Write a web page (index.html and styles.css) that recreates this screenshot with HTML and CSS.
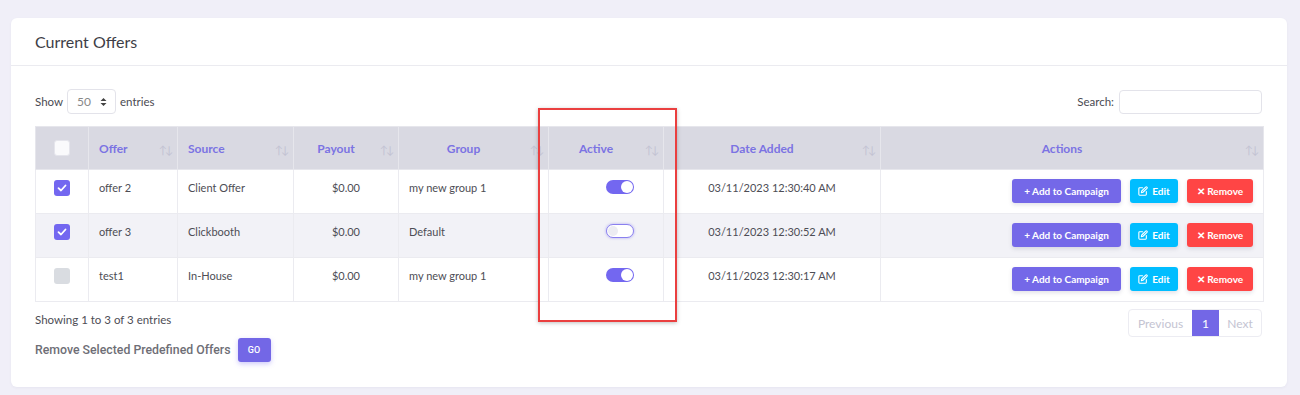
FILE: index.html
```html
<!DOCTYPE html>
<html>
<head>
<meta charset="utf-8">
<link rel="stylesheet" href="styles.css">
</head>
<body>
<div class="card">
  <div class="card-header">Current Offers</div>
  <div class="card-body">
    <div class="toolbar">
      <div class="length">Show <span class="select">50 <svg width="7" height="10" viewBox="0 0 7 10"><path d="M0.5 4 L3.5 1 L6.5 4 Z M0.5 6 L3.5 9 L6.5 6 Z" fill="#444"/></svg></span> entries</div>
      <div class="search">Search: <span class="input"></span></div>
    </div>
    <table class="grid">
      <colgroup>
        <col style="width:53px"><col style="width:89px"><col style="width:116px"><col style="width:105px"><col style="width:150px"><col style="width:115px"><col style="width:217px"><col style="width:383px">
      </colgroup>
      <thead>
        <tr>
          <th class="c-check"><span class="cb cb-head"></span></th>
          <th class="left">Offer<span class="sort">↑↓</span></th>
          <th class="left">Source<span class="sort">↑↓</span></th>
          <th>Payout<span class="sort">↑↓</span></th>
          <th>Group<span class="sort">↑↓</span></th>
          <th>Active<span class="sort">↑↓</span></th>
          <th>Date Added<span class="sort">↑↓</span></th>
          <th>Actions<span class="sort">↑↓</span></th>
        </tr>
      </thead>
      <tbody>
        <tr>
          <td class="c-check"><span class="cb cb-on"><svg width="10" height="8" viewBox="0 0 10 8"><path d="M1.5 4.2 L4 6.5 L8.5 1.5" stroke="#fff" stroke-width="1.8" fill="none" stroke-linecap="round" stroke-linejoin="round"/></svg></span></td>
          <td>offer 2</td>
          <td>Client Offer</td>
          <td class="right">$0.00</td>
          <td>my new group 1</td>
          <td class="c-toggle"><span class="toggle on"></span></td>
          <td class="center">03/11/2023 12:30:40 AM</td>
          <td class="c-actions"><div class="actions"><span class="btn btn-add">+ Add to Campaign</span><span class="btn btn-edit"><svg width="10" height="10" viewBox="0 0 24 24" fill="none" stroke="#fff" stroke-width="2.6" stroke-linecap="round" stroke-linejoin="round"><path d="M11 4H4a2 2 0 0 0-2 2v14a2 2 0 0 0 2 2h14a2 2 0 0 0 2-2v-7"/><path d="M18.5 2.5a2.121 2.121 0 0 1 3 3L12 15l-4 1 1-4 9.5-9.5z"/></svg>Edit</span><span class="btn btn-remove">✕ Remove</span></div></td>
        </tr>
        <tr class="alt">
          <td class="c-check"><span class="cb cb-on"><svg width="10" height="8" viewBox="0 0 10 8"><path d="M1.5 4.2 L4 6.5 L8.5 1.5" stroke="#fff" stroke-width="1.8" fill="none" stroke-linecap="round" stroke-linejoin="round"/></svg></span></td>
          <td>offer 3</td>
          <td>Clickbooth</td>
          <td class="right">$0.00</td>
          <td>Default</td>
          <td class="c-toggle"><span class="toggle off"></span></td>
          <td class="center">03/11/2023 12:30:52 AM</td>
          <td class="c-actions"><div class="actions"><span class="btn btn-add">+ Add to Campaign</span><span class="btn btn-edit"><svg width="10" height="10" viewBox="0 0 24 24" fill="none" stroke="#fff" stroke-width="2.6" stroke-linecap="round" stroke-linejoin="round"><path d="M11 4H4a2 2 0 0 0-2 2v14a2 2 0 0 0 2 2h14a2 2 0 0 0 2-2v-7"/><path d="M18.5 2.5a2.121 2.121 0 0 1 3 3L12 15l-4 1 1-4 9.5-9.5z"/></svg>Edit</span><span class="btn btn-remove">✕ Remove</span></div></td>
        </tr>
        <tr>
          <td class="c-check"><span class="cb cb-off"></span></td>
          <td>test1</td>
          <td>In-House</td>
          <td class="right">$0.00</td>
          <td>my new group 1</td>
          <td class="c-toggle"><span class="toggle on"></span></td>
          <td class="center">03/11/2023 12:30:17 AM</td>
          <td class="c-actions"><div class="actions"><span class="btn btn-add">+ Add to Campaign</span><span class="btn btn-edit"><svg width="10" height="10" viewBox="0 0 24 24" fill="none" stroke="#fff" stroke-width="2.6" stroke-linecap="round" stroke-linejoin="round"><path d="M11 4H4a2 2 0 0 0-2 2v14a2 2 0 0 0 2 2h14a2 2 0 0 0 2-2v-7"/><path d="M18.5 2.5a2.121 2.121 0 0 1 3 3L12 15l-4 1 1-4 9.5-9.5z"/></svg>Edit</span><span class="btn btn-remove">✕ Remove</span></div></td>
        </tr>
      </tbody>
    </table>
    <div class="footer">
      <div class="foot-left">
        <div class="info">Showing 1 to 3 of 3 entries</div>
        <div class="bulk">Remove Selected Predefined Offers <span class="go">GO</span></div>
      </div>
      <div class="pager">
        <span class="pg pg-prev">Previous</span><span class="pg pg-active">1</span><span class="pg pg-next">Next</span>
      </div>
    </div>
  </div>
  <div class="highlight"></div>
</div>
</body>
</html>
```

FILE: styles.css
```css
* { box-sizing: border-box; }
html, body { margin: 0; padding: 0; }
body {
  background: #f0eff8;
  font-family: "Lato", "Noto Sans", sans-serif;
  color: #5e5873;
  padding: 18px 13px 0 11px;
  height: 395px;
  overflow: hidden;
}
.card {
  position: relative;
  background: #fff;
  border-radius: 6px;
  height: 369px;
  box-shadow: 0 1px 3px rgba(60, 60, 100, 0.05);
}
.card-header {
  height: 48px;
  padding: 0 24px;
  display: flex;
  align-items: center;
  font-size: 16px;
  color: #3d3d46;
  border-bottom: 1px solid #ebebf0;
}
.card-body { padding: 23px 24px 0 24px; }
.toolbar {
  display: flex;
  justify-content: space-between;
  align-items: center;
  height: 25px;
  margin-bottom: 12px;
  font-size: 11.5px;
  color: #4a4a52;
}
.length { display: flex; align-items: center; gap: 4px; }
.select {
  display: inline-flex;
  align-items: center;
  justify-content: space-between;
  width: 49px;
  height: 25px;
  padding: 0 8px 0 9px;
  border: 1px solid #e3e3ea;
  border-radius: 4px;
  color: #888;
  font-size: 12px;
}
.search { display: flex; align-items: center; gap: 5px; margin-right: 1px; }
.input {
  display: inline-block;
  width: 143px;
  height: 24px;
  border: 1px solid #e3e3ea;
  border-radius: 4px;
}
.grid {
  width: 1228px;
  table-layout: fixed;
  border-collapse: collapse;
  font-size: 11px;
}
.grid th {
  position: relative;
  height: 43px;
  background: #d9d9e2;
  color: #7b73e3;
  font-size: 12px;
  font-weight: 700;
  text-align: center;
  border: 1px solid #e6e6ec;
  padding: 0 30px 0 10px;
}
.grid th.left { text-align: left; }
.grid th.c-check { padding: 0; }
.sort {
  position: absolute;
  right: 6px;
  top: 16px;
  font-size: 11px;
  font-weight: 400;
  color: #c3c3d3;
  letter-spacing: -2px;
}
.grid td {
  height: 44px;
  border: 1px solid #ebebf0;
  padding: 11px 10px 0 10px;
  color: #4d4d55;
  vertical-align: top;
  white-space: nowrap;
}
.grid tr.alt td { background: #f2f2f7; }
.grid td.right { text-align: right; padding-right: 38px; }
.grid td.center { text-align: center; }
.grid td.c-check { padding: 10px 0 0 0; text-align: center; }
.cb {
  display: inline-flex;
  align-items: center;
  justify-content: center;
  width: 16px;
  height: 16px;
  border-radius: 3px;
  vertical-align: middle;
}
.cb-head { background: #fafafc; border: 1px solid #e5e5ec; }
.cb-on { background: #7367f0; }
.cb-off { background: #d9dce1; }
.c-check .cb { margin-left: -1px; }
.grid td.c-toggle { padding: 10px 0 0 57px; }
.toggle {
  display: block;
  position: relative;
  width: 28px;
  height: 14px;
  border-radius: 7px;
}
.toggle.on { background: #7367f0; }
.toggle.on::after {
  content: "";
  position: absolute;
  right: 1px;
  top: 1px;
  width: 12px;
  height: 12px;
  border-radius: 50%;
  background: #fff;
}
.toggle.off {
  background: #fff;
  border: 1px solid #8a80ef;
  box-shadow: 0 0 2px 1px rgba(115, 103, 240, 0.25);
}
.toggle.off::after {
  content: "";
  position: absolute;
  left: 1px;
  top: 1px;
  width: 10px;
  height: 10px;
  border-radius: 50%;
  background: #ececf2;
}
.grid td.c-actions { padding: 9px 10px 0 0; }
.actions { display: flex; justify-content: flex-end; gap: 9px; }
.btn {
  display: inline-flex;
  align-items: center;
  justify-content: center;
  gap: 4px;
  height: 24px;
  padding: 0;
  border-radius: 3px;
  color: #fff;
  font-size: 10px;
  font-weight: 700;
  white-space: nowrap;
  box-shadow: 0 2px 4px rgba(60, 60, 100, 0.15);
}
.btn svg { flex-shrink: 0; }
.btn-add { background: #7468e8; width: 109px; }
.btn-edit { background: #00bdff; width: 48px; }
.btn-remove { background: #ff4545; width: 66px; }
.footer {
  display: flex;
  justify-content: space-between;
  align-items: flex-start;
  margin-top: 7px;
}
.info { font-size: 11.5px; color: #4d4d55; height: 24px; line-height: 24px; margin-top: -1px; }
.bulk {
  display: flex;
  align-items: center;
  gap: 7px;
  margin-top: 6px;
  font-family: "Roboto", "Lato", sans-serif;
  font-size: 12.3px;
  font-weight: 500;
  color: #6e6e76;
}
.go {
  display: inline-flex;
  align-items: center;
  justify-content: center;
  width: 33px;
  height: 24px;
  border-radius: 3px;
  background: #7367e6;
  color: #fff;
  font-size: 9px;
  font-weight: 500;
  box-shadow: 0 2px 5px rgba(115, 103, 240, 0.35);
}
.pager {
  display: flex;
  height: 28px;
  border: 1px solid #ececf2;
  border-radius: 4px;
  overflow: hidden;
  margin-right: 1px;
}
.pg {
  display: flex;
  align-items: center;
  justify-content: center;
  font-size: 12px;
  color: #c4c4d2;
}
.pg-prev { width: 63px; }
.pg-active { width: 27px; background: #7367e6; color: #fff; }
.pg-next { width: 42px; }
.highlight {
  position: absolute;
  left: 527px;
  top: 90px;
  width: 139px;
  height: 214px;
  border: 2px solid #ea3f3f;
  box-shadow: 0 1px 4px rgba(0, 0, 0, 0.25);
  pointer-events: none;
}
```
